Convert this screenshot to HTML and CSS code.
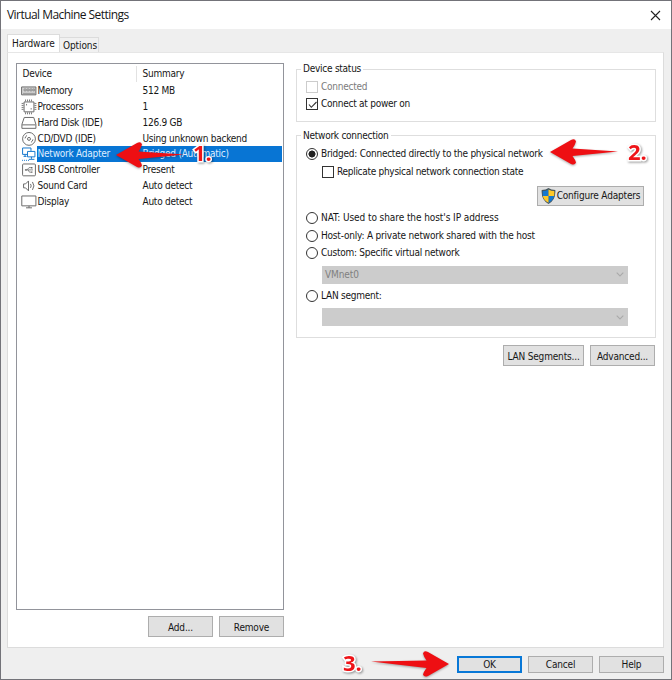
FILE: index.html
```html
<!DOCTYPE html>
<html lang="en">
<head>
<meta charset="utf-8">
<title>Virtual Machine Settings</title>
<link rel="stylesheet" href="styles.css">
</head>
<body>
<div class="window">
  <header class="titlebar">
    <h1>Virtual Machine Settings</h1>
    <svg class="close" width="11" height="11" viewBox="0 0 11 11"><path d="M1 1l9 9M10 1l-9 9"/></svg>
  </header>
  <nav class="tabs"><span class="tab active">Hardware</span><span class="tab">Options</span></nav>
  <main class="panel">
    <section class="left">
      <div class="devices">
        <div class="row head"><span class="name">Device</span><span class="summary">Summary</span></div>
        <div class="row">
          <svg class="icon" viewBox="0 0 16 16"><path class="soft" d="M.5 4h14.500v8H.5z"/><path class="chips" d="M3 6h2v2H3zM6 6h2v2H6zM9 6h2v2H9zM12 6h1.500v2H12zM2 10.500h12"/></svg>
          <span class="name">Memory</span><span class="summary">512 MB</span></div>
        <div class="row">
          <svg class="icon" viewBox="0 0 16 16"><path d="M3 3h10v10H3z"/><path class="pins" d="M4.500 .5v2M6.500 .5v2M8.500 .5v2M10.500 .5v2M4.500 13.500v2M6.500 13.500v2M8.500 13.500v2M10.500 13.500v2M.5 4.500h2M.5 6.500h2M.5 8.500h2M.5 10.500h2M13.500 4.500h2M13.500 6.500h2M13.500 8.500h2M13.500 10.500h2M5.500 5v1.500M9.500 10h1.500"/></svg>
          <span class="name">Processors</span><span class="summary">1</span></div>
        <div class="row">
          <svg class="icon" viewBox="0 0 16 16"><path d="M3.200 2.500h9.600L15 9.500V13.500H.8V9.500zM1 10h13.800"/></svg>
          <span class="name">Hard Disk (IDE)</span><span class="summary">126.9 GB</span></div>
        <div class="row">
          <svg class="icon" viewBox="0 0 16 16"><circle cx="8" cy="8" r="6.500"/><circle cx="8" cy="8" r="1.500"/><path d="M4 7.500a4 4 0 0 1 2-3M12 8.500a4 4 0 0 1-2 3"/></svg>
          <span class="name">CD/DVD (IDE)</span><span class="summary">Using unknown backend</span></div>
        <div class="row selected">
          <svg class="icon" viewBox="0 0 16 16"><path d="M10 5V2H1.500v6.500H6M4 8.500v2M2.500 10.500h3M6.500 5.500H14v5.500H6.500zM10.500 11v2M8 13.500h5.500"/><path class="dots" d="M1 14.500h8"/></svg>
          <span class="name">Network Adapter</span><span class="summary">Bridged (Automatic)</span></div>
        <div class="row">
          <svg class="icon" viewBox="0 0 16 16"><rect x="1.500" y="2" width="13" height="12" rx="1"/><path class="thin" d="M4 8h8M6 8l2-2.300h2M7 8l1.500 2.300H10"/><path class="fill" d="M3.500 8l2-1.200v2.400zM10 5h1.500v1.500H10zM10 9.500h1.500V11H10z"/></svg>
          <span class="name">USB Controller</span><span class="summary">Present</span></div>
        <div class="row">
          <svg class="icon" viewBox="0 0 16 16"><path d="M2.500 6h2l3-3v10l-3-3h-2zM9.500 6q1.500 2 0 4M11.500 4q3 4 0 8"/></svg>
          <span class="name">Sound Card</span><span class="summary">Auto detect</span></div>
        <div class="row">
          <svg class="icon" viewBox="0 0 16 16"><path d="M.7 2H15v10H.7zM5 14h6M8 12v2"/></svg>
          <span class="name">Display</span><span class="summary">Auto detect</span></div>
      </div>
      <div class="actions"><button>Add...</button><button>Remove</button></div>
    </section>
    <section class="right">
      <div class="group status">
        <h2>Device status</h2>
        <label class="option disabled"><i class="box"></i>Connected</label>
        <label class="option"><i class="box"><svg width="12" height="12" viewBox="0 0 12 12"><path d="M2 5.500l2.300 2.800L9.500 3"/></svg></i>Connect at power on</label>
      </div>
      <div class="group network">
        <h2>Network connection</h2>
        <label class="option"><i class="radio on"></i>Bridged: Connected directly to the physical network</label>
        <label class="option nested"><i class="box"></i>Replicate physical network connection state</label>
        <button class="configure"><svg width="15" height="16" viewBox="0 0 15 16"><path fill="#45545c" d="M7.500 0Q10 2 14.300 2q.8 10-6.800 14Q-.1 12 .7 2 5 2 7.500 0z"/><path fill="#1578cf" d="M7.500 1.500V8H1.800Q1.500 5 1.700 3 5 3 7.500 1.500zM7.500 8h5.700q-1 4.500-5.700 6.800z"/><path fill="#ffc928" d="M7.500 1.500Q10 3 13.300 3q.2 2-.1 5H7.500zM1.800 8h5.700v6.800Q2.800 12.500 1.800 8z"/></svg><span>Configure Adapters</span></button>
        <label class="option nat"><i class="radio"></i>NAT: Used to share the host's IP address</label>
        <label class="option host"><i class="radio"></i>Host-only: A private network shared with the host</label>
        <label class="option"><i class="radio"></i>Custom: Specific virtual network</label>
        <div class="select"><span>VMnet0</span><svg width="8" height="5" viewBox="0 0 8 5"><path d="M.7.700 4 4 7.300.700"/></svg></div>
        <label class="option lan"><i class="radio"></i>LAN segment:</label>
        <div class="select"><span></span><svg width="8" height="5" viewBox="0 0 8 5"><path d="M.7.700 4 4 7.300.700"/></svg></div>
      </div>
      <div class="actions"><button class="wide">LAN Segments...</button><button>Advanced...</button></div>
    </section>
  </main>
  <footer class="footer"><button class="default">OK</button><button>Cancel</button><button>Help</button></footer>

  <svg class="arrow first" width="70" height="28" viewBox="0 0 70 28"><path d="M1 14 22 2q4-2 5 1.500-.5 2.500-3.500 7L69 13.500 23.500 18q3 4 3.500 6.500-1 3-5 1.500z"/></svg>
  <svg class="arrow second" width="70" height="28" viewBox="0 0 70 28"><path d="M1 14 22 2q4-2 5 1.500-.5 2.500-3.500 7L69 13.500 23.500 18q3 4 3.500 6.500-1 3-5 1.500z"/></svg>
  <svg class="arrow third" width="80" height="28" viewBox="0 0 80 28"><path d="M79 14 58 2q-4-2-5 1.500.5 2.500 3.500 7L1 11.500 56.500 18q-3 4-3.500 6.500 1 3 5 1.500z"/></svg>
  <b class="step one">1.</b><b class="step two">2.</b><b class="step three">3.</b>
</div>
</body>
</html>
```

FILE: styles.css
```css
* { box-sizing: border-box; }
body { margin: 0; }
.window {
  position: relative;
  display: flex;
  flex-direction: column;
  width: 672px;
  height: 680px;
  border: 1px solid #737379;
  background: #efefef;
  color: #161616;
  font: 10px/16px "DejaVu Sans Condensed", "DejaVu Sans", sans-serif;
  font-stretch: condensed;
  letter-spacing: -.25px;
  white-space: nowrap;
  overflow: hidden;
}
.titlebar {
  display: flex;
  justify-content: space-between;
  align-items: center;
  height: 28px;
  padding: 0 10px 0 6px;
  background: #fff;
}
h1 { margin: 0; font: 12px/16px "Open Sans", sans-serif; letter-spacing: -.55px; }
.close { fill: none; stroke: #222; stroke-width: 1.1; }
.tabs { display: flex; align-items: flex-end; height: 23px; padding: 0 6px; }
.tab { height: 15px; width: 39px; padding-left: 3px; background: #f1f1f1; border: 1px solid #dcdcdc; border-width: 1px 1px 0 0; letter-spacing: -.1px; }
.tab.active { width: 53px; height: 18px; padding-left: 4px; background: #fff; border-left-width: 1px; line-height: 17px; }
.panel { display: flex; justify-content: space-between; height: 596px; margin: 0 7px 0 6px; padding: 10px 7px 0 8px; background: #fff; border: 1px solid #dcdcdc; border-top-color: #e6e6e6; }
.left { width: 268px; }
.devices { height: 547px; padding-top: 2px; border: 1px solid #92949b; }
.row { display: flex; align-items: center; height: 15.85px; padding-left: 4px; }
.row.head { height: 16px; margin-bottom: 1px; }
.icon { width: 16px; height: 15.8px; fill: none; stroke: #6b6b6b; stroke-width: 1; }
.icon .soft { fill: #d5d5d5; }
.icon .chips { stroke-width: .6; }
.icon .pins { stroke-width: .9; }
.icon .thin { stroke-width: .8; }
.icon .fill { fill: #666; stroke: none; }
.icon .dots { stroke-dasharray: 1 1; }
.name { width: 100px; height: 100%; padding-left: .6px; }
.head .name { width: 116px; padding-left: 1.5px; border-right: 1px solid #e2e2e2; }
.summary { flex: 1; height: 100%; padding-left: 5.5px; }
.selected .icon { stroke: #1678cd; }
.selected .name, .selected .summary { background: #0875d4; color: #dfedff; }
.selected .summary { margin-right: 1px; }
.actions { display: flex; justify-content: flex-end; gap: 6px; margin-top: 6px; }
button { display: flex; align-items: center; justify-content: center; width: 65px; height: 20px; padding: 1px 0 0; border: 1px solid #adadad; background: #e1e1e1; color: inherit; font: inherit; font-stretch: inherit; letter-spacing: -.17px; }
.actions button { height: 21px; padding-top: 2px; }
.right { width: 360px; padding-top: 6px; }
.right .actions { margin: 7px 1px 0 0; }
.group { position: relative; border: 1px solid #dedede; }
.group h2 { position: absolute; top: -9px; left: 4px; margin: 0; padding: 0 2px; background: #fff; font: inherit; font-stretch: inherit; }
.network h2 { top: -8px; }
.status { height: 53px; padding: 8px 9px; }
.network { height: 203px; margin-top: 13px; padding: 9px 9px; }
.option { display: flex; align-items: center; gap: 3px; height: 17.4px; }
.box, .radio { flex: none; width: 12px; height: 12px; border: 1px solid #333; background: #fff; }
.box svg { display: block; margin: -.5px; fill: none; stroke: #333; stroke-width: 1.1; }
.radio { border-radius: 50%; }
.radio.on { background: radial-gradient(circle, #222 0 3.2px, #fff 3.8px); }
.disabled { color: #7c7c7c; }
.disabled .box { border-color: #ccc; }
.nested { margin: 1px 0 0 16px; letter-spacing: -.29px; }
.configure { width: 107px; margin: 5px 0 0 231px; gap: 1px; }
.nat { margin-top: 4px; letter-spacing: -.08px; }
.host { letter-spacing: -.2px; }
.select { display: flex; align-items: center; justify-content: space-between; width: 306px; height: 18px; margin: 4px 0 0 16px; padding: 0 4px 0 3px; background: #ccc; color: #808080; letter-spacing: -.1px; }
.select svg { fill: none; stroke: #aaa; stroke-width: 1.1; }
.lan { margin-top: 3px; }
.wide { width: 81px; }
.footer { display: flex; justify-content: flex-end; gap: 6px; margin-top: 8px; padding-right: 7px; }
.footer button { height: 17px; padding: 0; }
.footer .default { border: 2px solid #0878d7; }
.arrow { position: absolute; fill: #ee0f13; filter: drop-shadow(0 1px 1px #0005); }
.first { left: 114px; top: 140px; }
.second { left: 548px; top: 137px; }
.third { left: 369px; top: 649px; }
.step {
  position: absolute;
  font: bold 22px/24px "Open Sans", sans-serif;
  letter-spacing: 0;
  color: #ee1418;
  -webkit-text-stroke: 3px #fff;
  paint-order: stroke fill;
  filter: drop-shadow(1px 1px 1px #0006);
}
.one { left: 192px; top: 139px; }
.two { left: 627px; top: 138px; }
.three { left: 342px; top: 649px; }
```
